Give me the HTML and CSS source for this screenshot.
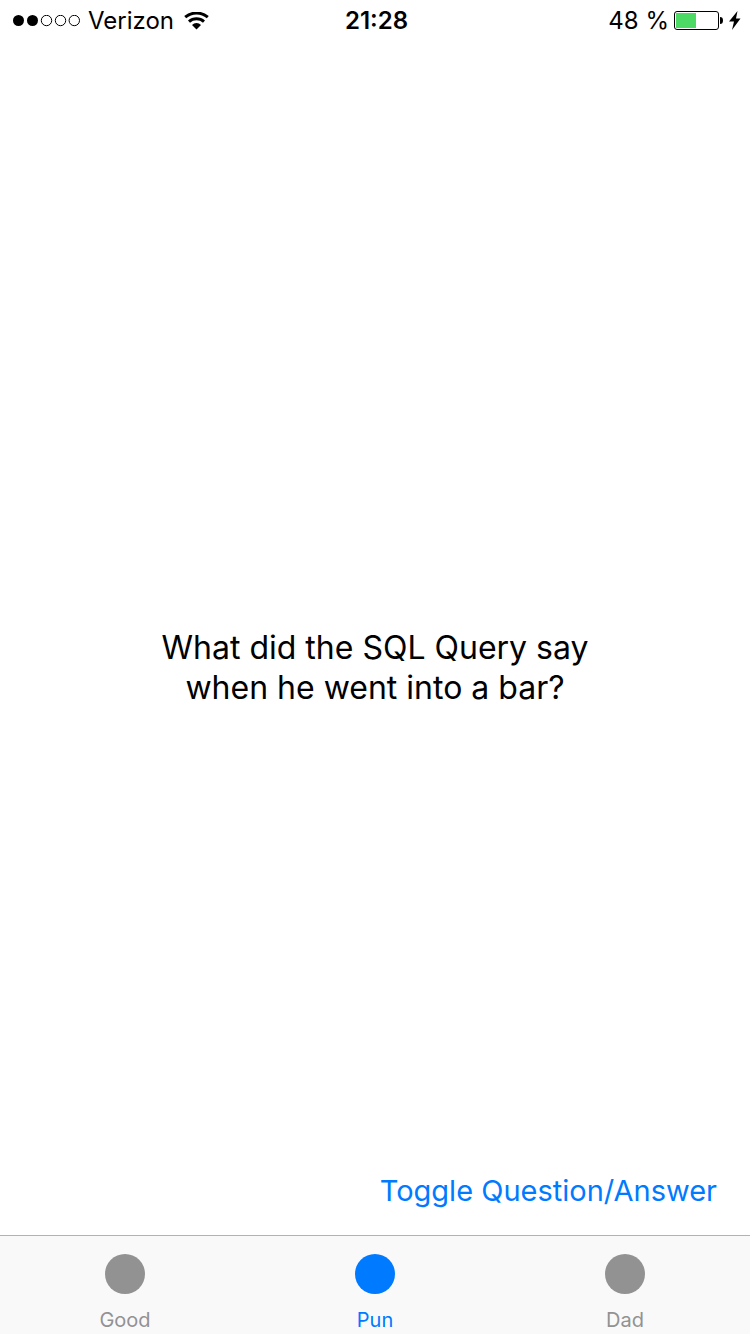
FILE: index.html
```html
<!DOCTYPE html>
<html lang="en">
<head>
<meta charset="utf-8">
<meta name="viewport" content="width=device-width, initial-scale=1">
<title>Pun</title>
<link rel="stylesheet" href="styles.css">
</head>
<body>
<header class="status">
  <div class="status-left">
    <svg class="signal" width="68" height="12" viewBox="0 0 68 12" aria-hidden="true">
      <circle cx="6.500" cy="5.500" r="5.500"/>
      <circle cx="20.500" cy="5.500" r="5.500"/>
      <g fill="none" stroke="#000" stroke-width="1">
        <circle cx="34.500" cy="5.500" r="5.200"/>
        <circle cx="48.500" cy="5.500" r="5.200"/>
        <circle cx="62.300" cy="5.500" r="5.200"/>
      </g>
    </svg>
    <span class="carrier">Verizon</span>
    <svg class="wifi" width="26" height="18" viewBox="0 0 26 18" aria-hidden="true">
      <g fill="none" stroke="#000" stroke-width="3">
        <path d="M1.200 5.200a17.500 17.500 0 0 1 22.600 0"/>
        <path d="M5 9.600a11.200 11.200 0 0 1 15 0"/>
      </g>
      <path d="M8 13a6.200 6.200 0 0 1 9 0L12.500 17.500z"/>
    </svg>
  </div>
  <time class="clock">21:28</time>
  <div class="status-right">
    <span class="charge">48 %</span>
    <svg class="battery" width="50" height="20" viewBox="0 0 50 20" aria-hidden="true">
      <rect x=".5" y=".5" width="44" height="18" rx="2.5" fill="none" stroke="#000"/>
      <rect x="2" y="2" width="20" height="15" fill="#4cd964"/>
      <path d="M46 6c2 0 3 1 3 3.500s-1 3.500-3 3.500z"/>
    </svg>
    <svg class="bolt" width="12" height="20" viewBox="0 0 12 20" aria-hidden="true">
      <path d="M8.500 0 0 10.500h5L3 19 11.500 7.500H7z"/>
    </svg>
  </div>
</header>
<main class="joke">
  <p class="question">What did the SQL Query say<br>when he went into a bar?</p>
  <button class="toggle" type="button">Toggle Question/Answer</button>
</main>
<nav class="tabs">
  <button class="tab" type="button"><span class="dot"></span>Good</button>
  <button class="tab tab-active" type="button" aria-current="page"><span class="dot"></span>Pun</button>
  <button class="tab" type="button"><span class="dot"></span>Dad</button>
</nav>
</body>
</html>
```
FILE: styles.css
```css
* {
  box-sizing: border-box;
}

body {
  margin: 0;
  min-height: 100vh;
  display: flex;
  flex-direction: column;
  background: #fff;
  color: #000;
  font-family: Inter, "Liberation Sans", sans-serif;
}

button {
  margin: 0;
  padding: 0;
  border: 0;
  background: none;
  font: inherit;
  cursor: pointer;
}

svg {
  display: block;
  flex: none;
}

.status {
  display: grid;
  grid-template-columns: 1fr auto 1fr;
  align-items: center;
  padding: 1px 9px 0 12px;
  font-size: 24px;
  line-height: 40px;
}

.status-left,
.status-right {
  display: flex;
  align-items: center;
}

.status-left {
  gap: 8px;
}

.wifi {
  margin-left: 2px;
}

.clock {
  font-weight: 600;
}

.status-right {
  justify-content: flex-end;
  gap: 5px;
}

.joke {
  flex: 1;
  display: grid;
  grid-template-rows: 1fr auto 1fr;
  padding: 84px 33px 24px;
}

.question {
  grid-row: 2;
  margin: 0;
  font-size: 32px;
  line-height: 40px;
  text-align: center;
}

.toggle {
  grid-row: 3;
  align-self: end;
  justify-self: end;
  color: #007aff;
  font-size: 29px;
  line-height: 40px;
}

.tabs {
  display: grid;
  grid-template-columns: repeat(3, 1fr);
  border-top: 1px solid #b2b2b2;
  background: #f9f9f9;
}

.tab {
  display: flex;
  flex-direction: column;
  align-items: center;
  gap: 14px;
  padding: 18px 0 2px;
  color: #929292;
  font-size: 20px;
  line-height: 24px;
}

.tab-active {
  color: #007aff;
}

.dot {
  width: 40px;
  height: 40px;
  border-radius: 50%;
  background: currentColor;
}
```
